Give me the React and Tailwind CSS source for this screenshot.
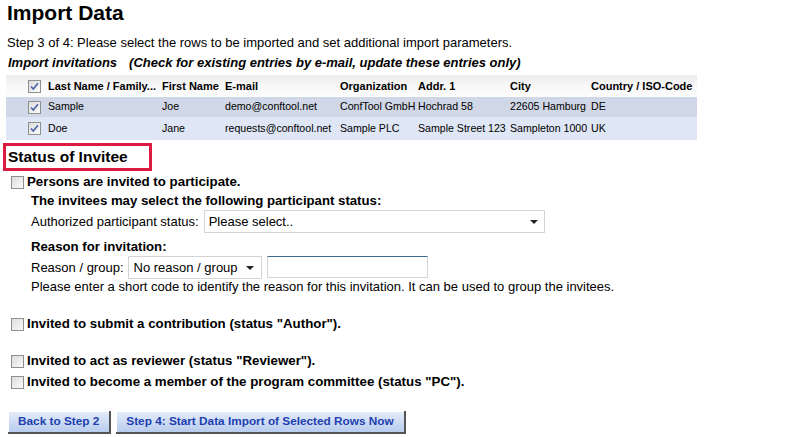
import React from "react";

function Box({ checked = false }) {
  return (
    <span className="inline-flex w-[13px] h-[13px] shrink-0 border border-[#8f8f8f] bg-gradient-to-br from-[#dcdcdc] to-[#fbfbfb] items-center justify-center">
      {checked && (
        <svg width="9" height="9" viewBox="0 0 9 9">
          <path d="M1 4.5 L3.3 7 L8 1.2" fill="none" stroke="#4d61a8" strokeWidth="1.6" />
        </svg>
      )}
    </span>
  );
}

const cols = "grid grid-cols-[42px_114px_63px_115px_78px_92px_81px_106px]";

const rows = [
  ["Sample", "Joe", "demo@conftool.net", "ConfTool GmbH", "Hochrad 58", "22605 Hamburg", "DE"],
  ["Doe", "Jane", "requests@conftool.net", "Sample PLC", "Sample Street 123", "Sampleton 1000", "UK"],
];

function Arrow() {
  return (
    <svg width="8" height="4" viewBox="0 0 8 4">
      <path d="M0 0 H8 L4 4 Z" fill="#222" />
    </svg>
  );
}

function Check({ children, className = "" }) {
  return (
    <div className={"flex items-center gap-[3px] pl-[11px] text-[13.3px] font-bold leading-[16px] " + className}>
      <Box />
      <span>{children}</span>
    </div>
  );
}

const btn =
  "h-[23px] px-[10px] text-[11.8px] font-bold text-[#1d3fb0] bg-gradient-to-b from-[#e6edf9] to-[#b8ccee] border-r-2 border-b-2 border-[#555] shadow-[inset_1px_1px_0_#ffffff]";

export default function App() {
  return (
    <div className="w-[788px] h-[437px] overflow-hidden bg-white text-black font-['Liberation_Sans',Arial,sans-serif]">
      <h1 className="pl-[7px] pt-[1px] text-[21px] leading-[24px] font-bold">Import Data</h1>
      <p className="pl-[7px] mt-[10px] text-[13px] leading-[16px]">
        Step 3 of 4: Please select the rows to be imported and set additional import parameters.
      </p>
      <p className="pl-[8px] mt-[4px] text-[13px] leading-[16px] font-bold italic">
        Import invitations<span className="ml-[12px]">(Check for existing entries by e-mail, update these entries only)</span>
      </p>
      <div className="ml-[6px] mt-[4px] w-[691px] text-[11px]">
        <div className={cols + " h-[22px] items-center font-bold whitespace-nowrap bg-gradient-to-b from-[#ececec] via-[#f8f8f8] to-[#fdfdfd]"}>
          <div className="flex pl-[22px]"><Box checked /></div>
          <div>Last Name / Family...</div>
          <div>First Name</div>
          <div>E-mail</div>
          <div>Organization</div>
          <div>Addr. 1</div>
          <div>City</div>
          <div>Country / ISO-Code</div>
        </div>
        {rows.map((r, i) => (
          <div key={i} className={cols + " items-center whitespace-nowrap text-[10.6px] " + (i === 0 ? "h-[20px] bg-[#d0d7e6]" : "h-[23px] bg-[#dfe6f5]")}>
            <div className="flex pl-[22px]"><Box checked /></div>
            {r.map((c, j) => (
              <div key={j}>{c}</div>
            ))}
          </div>
        ))}
      </div>
      <div className="ml-[3px] mt-[3px] w-[149px] h-[28px] border-[3px] border-[#dc1b41] flex items-center pl-[2px]">
        <span className="text-[15.5px] font-bold leading-[18px]">Status of Invitee</span>
      </div>
      <Check className="mt-[3px]">Persons are invited to participate.</Check>
      <div className="pl-[31px] text-[13px] leading-[16px]">
        <div className="font-bold text-[13.2px] mt-[3px]">The invitees may select the following participant status:</div>
        <div className="flex items-center mt-[1px]">
          <span>Authorized participant status:</span>
          <div className="ml-[5px] w-[341px] h-[23px] border border-[#d4d4d4] flex items-center justify-between pl-[4px] pr-[6px]">
            <span>Please select..</span>
            <Arrow />
          </div>
        </div>
        <div className="font-bold text-[13.2px] mt-[6px]">Reason for invitation:</div>
        <div className="flex items-center mt-[1px]">
          <span>Reason / group:</span>
          <div className="ml-[4px] w-[134px] h-[23px] border border-[#d4d4d4] flex items-center justify-between pl-[5px] pr-[7px]">
            <span>No reason / group</span>
            <Arrow />
          </div>
          <div className="ml-[5px] -mt-[2px] w-[161px] h-[22px] border border-[#d4d4d4] border-t-[#3d6b8c]" />
        </div>
        <div>Please enter a short code to identify the reason for this invitation. It can be used to group the invitees.</div>
      </div>
      <Check className="mt-[21px]">Invited to submit a contribution (status "Author").</Check>
      <Check className="mt-[21px]">Invited to act as reviewer (status "Reviewer").</Check>
      <Check className="mt-[5px]">Invited to become a member of the program committee (status "PC").</Check>
      <div className="flex gap-[5px] pl-[8px] mt-[21px]">
        <button className={btn}>Back to Step 2</button>
        <button className={btn}>Step 4: Start Data Import of Selected Rows Now</button>
      </div>
    </div>
  );
}
